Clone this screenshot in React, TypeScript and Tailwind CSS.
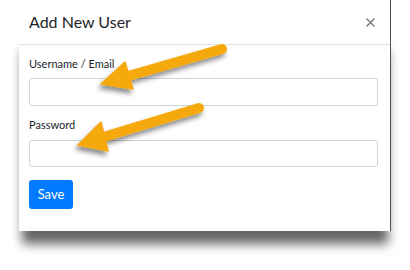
import React from 'react';

const Arrow: React.FC<{ tail: [number, number]; base: [number, number]; tip: [number, number]; w1: [number, number]; w2: [number, number] }> = ({ tail, base, tip, w1, w2 }) => (
  <g>
    <line x1={tail[0]} y1={tail[1]} x2={base[0]} y2={base[1]} stroke="#f6a90e" strokeWidth={10} strokeLinecap="round" />
    <polygon points={`${tip[0]},${tip[1]} ${w1[0]},${w1[1]} ${w2[0]},${w2[1]}`} fill="#f6a90e" strokeLinejoin="round" stroke="#f6a90e" strokeWidth={1.5} />
  </g>
);

export default function App() {
  return (
    <div className="relative w-[410px] h-[270px] bg-white overflow-hidden font-['Lato','Noto_Sans',sans-serif] text-[#212529]">
      {/* Modal card */}
      <div className="relative ml-[19px] w-[372px]">
        <div className="absolute inset-x-0 top-[32px] bottom-0 shadow-[0_16px_10px_-3px_rgba(0,0,0,0.6)]" />
        <div className="relative bg-white border-r border-[#505050]">
          {/* Header */}
          <div className="flex h-[45px] items-center justify-between border-b border-[#dee2e6] pl-[10px] pr-[14px]">
            <h5 className="text-[16px] leading-none">Add New User</h5>
            <svg width="9" height="9" viewBox="0 0 9 9" className="mr-[1px]">
              <path d="M1 1L8 8M8 1L1 8" stroke="#808080" strokeWidth="1.6" strokeLinecap="round" />
            </svg>
          </div>
          {/* Body */}
          <div className="flex flex-col px-[10px] pt-[11px] pb-[22px]">
            <label className="text-[11px] leading-[16px]">Username / Email</label>
            <input className="mt-[6px] h-[28px] w-[349px] rounded-[3px] border border-[#ced4da] bg-white outline-none" />
            <label className="mt-[11px] text-[11px] leading-[16px]">Password</label>
            <input type="password" className="mt-[7px] h-[27px] w-[349px] rounded-[3px] border border-[#ced4da] bg-white outline-none" />
            <button className="mt-[13px] h-[29px] w-[44px] rounded-[3px] bg-[#007bff] text-[13px] text-white">Save</button>
          </div>
        </div>
      </div>

      {/* Callout arrows */}
      <svg className="pointer-events-none absolute inset-0" width={410} height={270}>
        <defs>
          <filter id="sh" x="-20%" y="-30%" width="140%" height="180%">
            <feDropShadow dx="-2" dy="4" stdDeviation="2.5" floodColor="#000" floodOpacity="0.45" />
          </filter>
        </defs>
        <g filter="url(#sh)">
          <Arrow tail={[222, 49]} base={[130, 75.5]} tip={[101, 84]} w1={[125, 62]} w2={[133, 89]} />
          <Arrow tail={[199, 108]} base={[105, 136.5]} tip={[78, 145]} w1={[101, 122]} w2={[108, 151]} />
        </g>
      </svg>
    </div>
  );
}
